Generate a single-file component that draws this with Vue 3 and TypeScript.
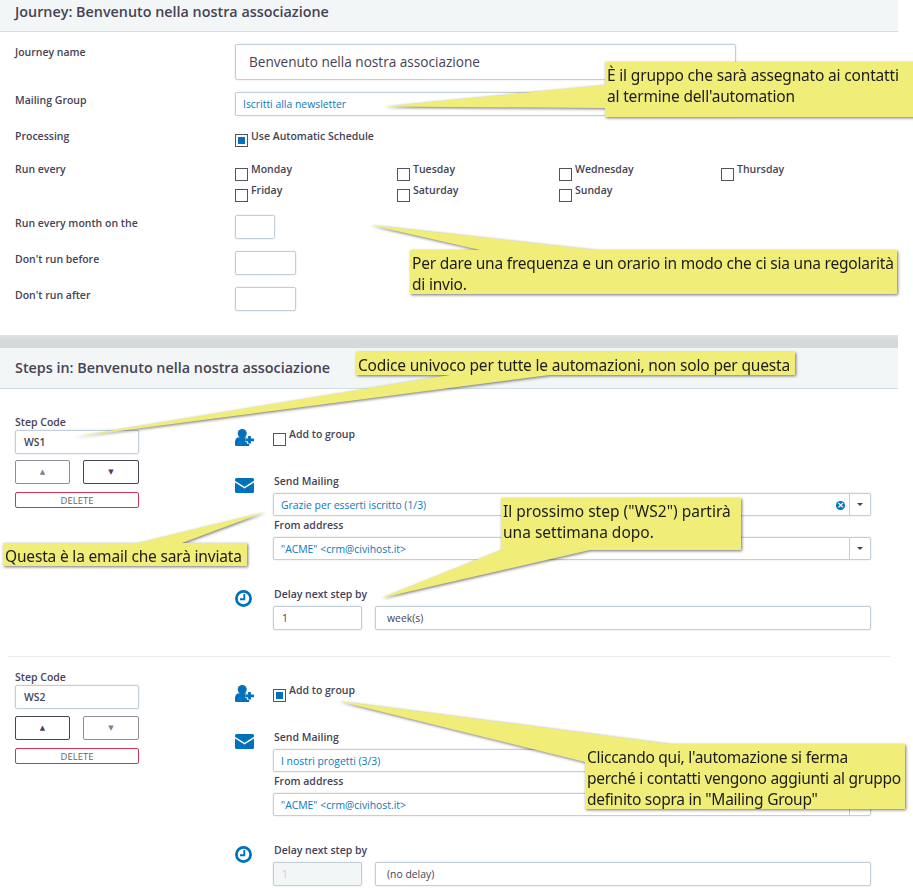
<script setup lang="ts">
interface Step {
  code: string
  upActive: boolean
  downActive: boolean
  addToGroup: boolean
  mailing: string
  clearable: boolean
  delay: string
  delayUnit: string
  delayDisabled: boolean
}

const firstDays: string[] = ['Monday', 'Tuesday', 'Wednesday', 'Thursday', 'Friday', 'Saturday', 'Sunday']

const steps: Step[] = [
  { code: 'WS1', upActive: false, downActive: true, addToGroup: false, mailing: 'Grazie per esserti iscritto (1/3)', clearable: true, delay: '1', delayUnit: 'week(s)', delayDisabled: false },
  { code: 'WS2', upActive: true, downActive: false, addToGroup: true, mailing: 'I nostri progetti (3/3)', clearable: false, delay: '1', delayUnit: '(no delay)', delayDisabled: true },
]

interface Note {
  id: string
  tail: string
  lines: string[]
}

const notes: Note[] = [
  { id: 'n1', tail: '384,106.5 605,85 605,108', lines: ['È il gruppo che sarà assegnato ai contatti', "al termine dell'automation"] },
  { id: 'n2', tail: '370,225 596,250 480,250', lines: ['Per dare una frequenza e un orario in modo che ci sia una regolarità', 'di invio.'] },
  { id: 'n3', tail: '72,437 450,375 550,375', lines: ['Codice univoco per tutte le automazioni, non solo per questa'] },
  { id: 'n4', tail: '265,512 138,543 182,543', lines: ['Questa è la email che sarà inviata'] },
  { id: 'n5', tail: '381,598 501,550 590,550', lines: ['Il prossimo step ("WS2") partirà', 'una settimana dopo.'] },
  { id: 'n6', tail: '338,701 670,744 585,762', lines: ["Cliccando qui, l'automazione si ferma", 'perché i contatti vengono aggiunti al gruppo', 'definito sopra in "Mailing Group"'] },
]
</script>

<template>
  <div class="page">
    <section class="panel">
      <h2 class="head head-first">Journey: Benvenuto nella nostra associazione</h2>
      <div class="form">
        <div class="row">
          <label class="lab">Journey name</label>
          <input class="field name-field" readonly value="Benvenuto nella nostra associazione" />
        </div>
        <div class="row">
          <label class="lab">Mailing Group</label>
          <div class="field select group-select"><span class="sel-text">Iscritti alla newsletter</span></div>
        </div>
        <div class="row row-short">
          <label class="lab">Processing</label>
          <div class="opt opt-proc"><span class="check on"></span><span>Use Automatic Schedule</span></div>
        </div>
        <div class="row row-days">
          <label class="lab">Run every</label>
          <div class="days">
            <div v-for="d in firstDays" :key="d" class="opt"><span class="check"></span><span>{{ d }}</span></div>
          </div>
        </div>
        <div class="row">
          <label class="lab">Run every month on the</label>
          <input class="field tiny" readonly />
        </div>
        <div class="row">
          <label class="lab">Don't run before</label>
          <input class="field small" readonly />
        </div>
        <div class="row">
          <label class="lab">Don't run after</label>
          <input class="field small" readonly />
        </div>
      </div>
      <div class="band"></div>
      <h2 class="head head-second">Steps in: Benvenuto nella nostra associazione</h2>
      <div class="steps">
        <div v-for="(s, i) in steps" :key="s.code" class="step" :class="{ 'step-next': i > 0 }">
          <div class="step-left">
            <label class="lab code-lab">Step Code</label>
            <input class="field code" readonly :value="s.code" />
            <div class="moves">
              <button class="move" :class="{ active: s.upActive }">▲</button>
              <button class="move" :class="{ active: s.downActive }">▼</button>
            </div>
            <button class="delete">DELETE</button>
          </div>
          <div class="step-right">
            <div class="act act-group">
              <svg class="ico" width="19" height="17" viewBox="0 0 19 17">
                <circle cx="7.200" cy="4.500" r="4.500" fill="#0071bd" />
                <path d="M0 15.500V13c0-3 1.800-4.800 4.200-4.800h6c2.400 0 4.200 1.800 4.200 4.800v2.500c0 1-.7 1.500-1.500 1.500H1.500C.7 17 0 16.500 0 15.500z" fill="#0071bd" />
                <path d="M14.500 7v8M10.500 11h8.500" stroke="#fff" stroke-width="4.600" />
                <path d="M14.500 7v7.500M10.500 10.800h8.500" stroke="#0071bd" stroke-width="2.800" />
              </svg>
              <div class="opt"><span class="check" :class="{ on: s.addToGroup }"></span><span>Add to group</span></div>
            </div>
            <div class="act act-mail">
              <svg class="ico ico-mail" width="19" height="15" viewBox="0 0 19 15">
                <path d="M1.500 0h16A1.500 1.500 0 0 1 19 1.500v1.300l-9.500 6-9.500-6V1.500A1.500 1.500 0 0 1 1.500 0z" fill="#0071bd" />
                <path d="M0 4.500l9.500 6 9.500-6v9a1.500 1.500 0 0 1-1.500 1.500h-16A1.500 1.500 0 0 1 0 13.500z" fill="#0071bd" />
              </svg>
              <div>
                <label class="lab lab-over">Send Mailing</label>
                <div class="field select wide">
                  <span class="sel-text">{{ s.mailing }}</span>
                  <span v-if="s.clearable" class="clear">×</span>
                  <span class="caret"></span>
                </div>
                <label class="lab lab-from">From address</label>
                <div class="field select wide">
                  <span class="sel-text">"ACME" &lt;crm@civihost.it&gt;</span>
                  <span class="caret"></span>
                </div>
              </div>
            </div>
            <div class="act act-delay">
              <svg class="ico" width="17" height="17" viewBox="0 0 17 17">
                <circle cx="8.500" cy="8.500" r="7.100" fill="none" stroke="#0071bd" stroke-width="2.700" />
                <path d="M9.300 4v5.200H5" fill="none" stroke="#0071bd" stroke-width="1.900" />
              </svg>
              <div>
                <label class="lab lab-over">Delay next step by</label>
                <div class="delay-row">
                  <input class="field delay-num" :class="{ off: s.delayDisabled }" readonly :value="s.delay" />
                  <div class="field delay-unit">{{ s.delayUnit }}</div>
                </div>
              </div>
            </div>
          </div>
        </div>
      </div>
    </section>

    <div v-for="n in notes" :key="n.id" class="note" :class="n.id">
      <svg class="tail" width="913" height="890"><polygon :points="n.tail" fill="#f0ee78" /></svg>
      <div class="note-box">
        <div v-for="l in n.lines" :key="l">{{ l }}</div>
      </div>
    </div>
  </div>
</template>

<style>
html, body { margin: 0; overflow: hidden; background: #fff; }
</style>

<style scoped>
.page {
  position: relative;
  width: 913px;
  height: 890px;
  overflow: hidden;
  font-family: "Open Sans", "Noto Sans", sans-serif;
  color: #464354;
  background: #fff;
}
.panel { width: 898px; }
.head {
  margin: 0;
  padding-left: 15px;
  font-size: 14.350px;
  font-weight: 600;
  background: #f3f6f7;
  border-bottom: 1px solid #d3dee2;
  color: #464354;
}
.head-first { height: 31px; line-height: 24px; }
.head-second { height: 40px; line-height: 40px; }
.form {
  display: flex;
  flex-direction: column;
  gap: 12px;
  padding: 12px 0 24px 15px;
}
.row { display: grid; grid-template-columns: 220px 1fr; align-items: start; }
.row-short { height: 24px; }
.row-days { height: 42px; margin-top: -3px; }
.lab { display: block; font-size: 10.500px; font-weight: 550; line-height: 16px; }
.field {
  display: block;
  box-sizing: border-box;
  height: 24px;
  margin: 0;
  border: 1px solid #c2cfd8;
  border-radius: 2px;
  background: #fff;
  box-shadow: 0 0 2px rgba(0, 0, 0, .15);
  font-family: inherit;
  color: #464354;
  outline: none;
}
.name-field {
  width: 501px;
  height: 36px;
  padding: 0 13px 2px;
  font-size: 13.600px;
}
.select {
  position: relative;
  display: flex;
  align-items: center;
  padding-left: 7px;
  font-size: 10.400px;
}
.group-select { width: 501px; }
.sel-text { color: #0b78c2; }
.opt {
  display: flex;
  gap: 3px;
  font-size: 10.500px;
  font-weight: 550;
  line-height: 16px;
  height: 21px;
}
.check {
  flex: none;
  box-sizing: border-box;
  width: 13px;
  height: 13px;
  margin-top: 7px;
  border: 1px solid #55535f;
  background: #fff;
}
.check.on { background: #0071bd; box-shadow: inset 0 0 0 2px #fff; }
.opt-proc .check { margin-top: 6px; }
.days { display: grid; grid-template-columns: repeat(4, 162px); }
.tiny { width: 40px; }
.small { width: 61px; }
.band {
  height: 13px;
  background: linear-gradient(#e2e5e6, #d5d9da 40%, #d5d9da);
}
.steps { padding-top: 25px; }
.step {
  display: grid;
  grid-template-columns: 220px 1fr;
  margin: 0 8px;
  padding: 0 19px 26px 7px;
  width: 856px;
}
.step-next { border-top: 1px solid #e9edef; padding-top: 13px; }
.step-next .code-lab { margin-top: -1px; }
.step-next .code { margin-bottom: 7px; }
.step-left { width: 124px; }
.code { width: 124px; padding-left: 8px; font-size: 10.400px; font-weight: 600; }
.moves { display: flex; justify-content: space-between; margin-top: 6px; }
.step-next .moves { margin-top: 0; }
.move {
  box-sizing: border-box;
  width: 55px;
  height: 24px;
  padding: 0;
  border: 1px solid #8f8e98;
  border-radius: 2px;
  background: #fff;
  color: #807f8a;
  font-family: "DejaVu Sans", sans-serif;
  font-size: 7px;
}
.move + .move { width: 56px; }
.move.active { border-color: #464354; color: #464354; }
.delete {
  display: block;
  box-sizing: border-box;
  width: 124px;
  height: 16px;
  margin-top: 8px;
  padding: 1px 0 0;
  border: 1px solid #cf3458;
  border-radius: 2px;
  background: #fff;
  color: #666;
  font-family: inherit;
  font-size: 9.500px;
  line-height: 13px;
}
.step-right { padding-top: 12px; }
.act { display: grid; grid-template-columns: 38px 1fr; align-items: start; }
.ico { display: block; }
.act-group { height: 47px; }
.act-group .ico { margin-top: 3px; }
.act-group .check { margin-top: 7px; }
.ico-mail { margin-top: 5px; }
.act-delay { margin-top: 26px; }
.act-delay .ico { margin-top: 4px; }
.lab-over { margin-bottom: 4px; padding-left: 1px; }
.lab-from { padding-left: 1px; margin: 1px 0 4px; }
.wide { width: 598px; height: 23px; padding-left: 7px; }
.clear {
  position: absolute;
  right: 25px;
  top: 7px;
  width: 9px;
  height: 9px;
  border-radius: 50%;
  background: #0071bd;
  color: #fff;
  font: 700 9px/9px "DejaVu Sans", sans-serif;
  text-align: center;
}
.caret {
  position: absolute;
  top: 0;
  right: 0;
  bottom: 0;
  width: 20px;
  border-left: 1px solid #c2cfd8;
}
.caret::after {
  content: "";
  position: absolute;
  left: 7px;
  top: 9px;
  border: 3px solid transparent;
  border-top: 3px solid #464354;
  border-bottom: 0;
}
.delay-row { display: flex; gap: 13px; }
.delay-num { width: 89px; padding-left: 8px; font-size: 10.400px; }
.delay-num.off { background: #f3f6f7; color: #c2cfd8; }
.delay-unit {
  width: 496px;
  padding-left: 11px;
  font-size: 10.400px;
  line-height: 22px;
}
.note {
  position: absolute;
  inset: 0;
  filter: drop-shadow(1.500px 1.500px 1.500px rgba(0, 0, 0, .55));
  pointer-events: none;
}
.tail { position: absolute; left: 0; top: 0; }
.note-box {
  position: absolute;
  box-sizing: border-box;
  background: #f0ee78;
  color: #1c1c1c;
  font-family: "Noto Sans", sans-serif;
  font-size: 15.500px;
  line-height: 21px;
  padding: 3px 2px 0;
  white-space: nowrap;
}
.n1 .note-box { left: 605px; top: 62px; width: 320px; height: 55px; letter-spacing: -.175px; }
.n2 .note-box { left: 410px; top: 250px; width: 487px; height: 44px; letter-spacing: -.21px; }
.n3 .note-box { left: 356px; top: 352px; width: 439px; height: 23px; padding-top: 3px; letter-spacing: -.18px; }
.n4 .note-box { left: 3px; top: 543px; width: 244px; height: 23px; letter-spacing: -.18px; }
.n5 .note-box { left: 501px; top: 498px; width: 240px; height: 52px; letter-spacing: .01px; }
.n6 .note-box { left: 585px; top: 744px; width: 320px; height: 65px; letter-spacing: -.26px; }
</style>
